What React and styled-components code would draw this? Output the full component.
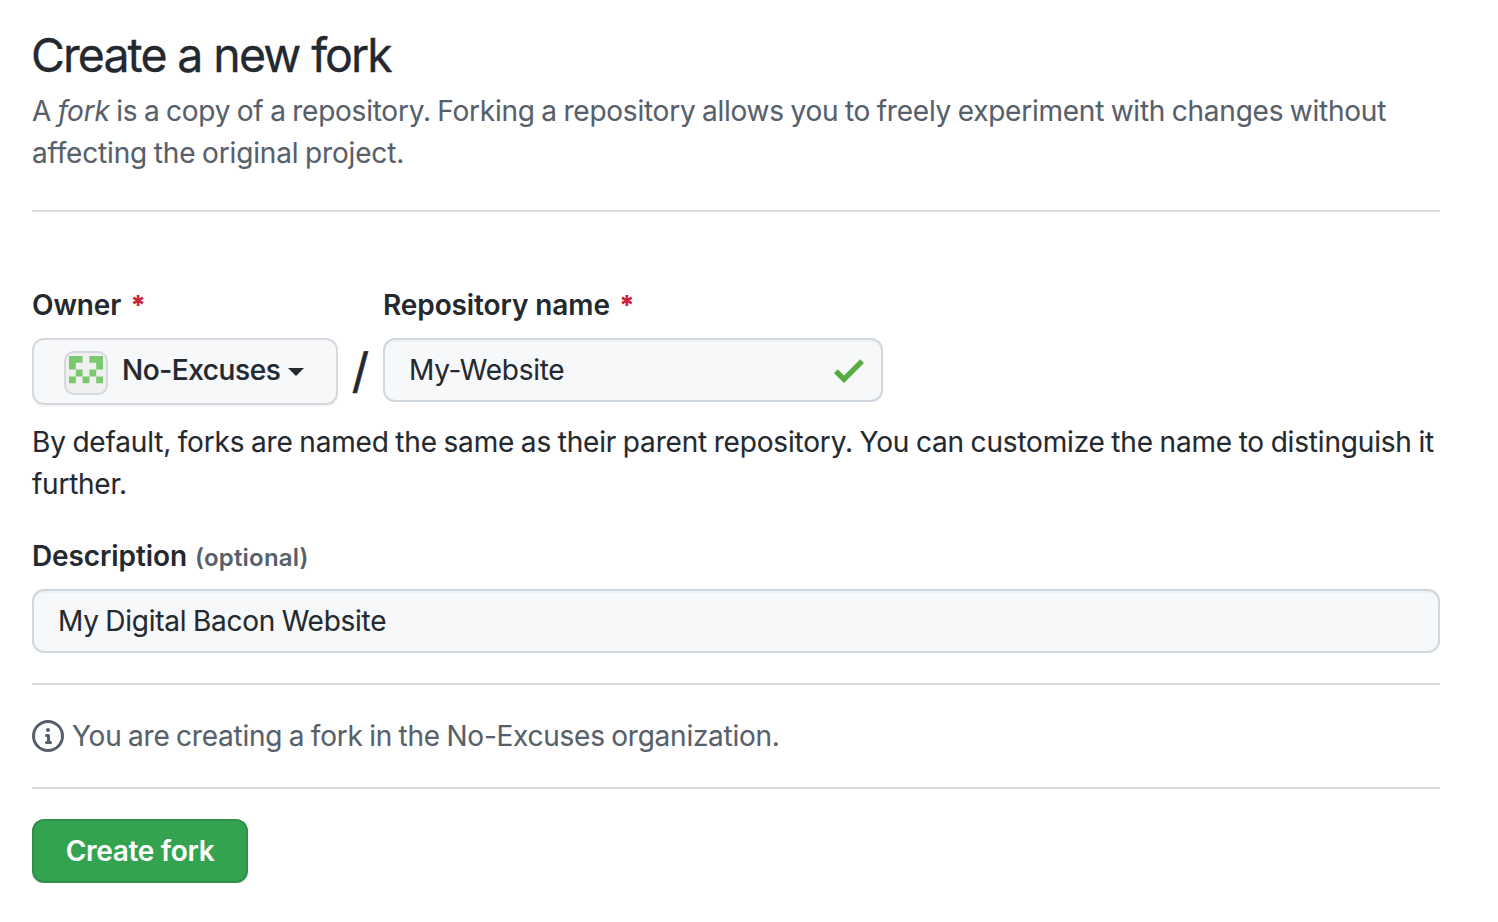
import React from "react";
import styled, { createGlobalStyle } from "styled-components";

const GlobalStyle = createGlobalStyle`
  *, *::before, *::after { box-sizing: border-box; }
  body {
    margin: 0;
    background: #ffffff;
    color: #24292f;
    font-family: Inter, "Liberation Sans", sans-serif;
    font-size: 28px;
    line-height: 42px;
  }
`;

const Page = styled.main`
  width: 1472px;
  padding: 20px 32px 0;
`;

const Title = styled.h1`
  margin: 0 0 0 -1px;
  font-size: 46.5px;
  font-weight: 400;
  line-height: 70px;
  letter-spacing: -1.95px;
  word-spacing: 0.7px;
  white-space: nowrap;
  -webkit-text-stroke: 0.3px currentColor;
`;

const Line = styled.span`
  display: block;
  white-space: nowrap;
  letter-spacing: ${(p) => p.$track ?? -0.25}px;
  word-spacing: -1px;
  -webkit-text-stroke: 0.1px currentColor;
`;

const Lead = styled.p`
  margin: 0;
  color: #57606a;
`;

const Divider = styled.hr`
  height: 2px;
  margin: ${(p) => p.$top}px 0 0;
  border: 0;
  background: #d8dee0;
`;

const NameRow = styled.div`
  display: flex;
  margin-top: 73px;
`;

const Field = styled.div`
  display: flex;
  flex-direction: column;
  gap: 13px;
  width: ${(p) => p.$width};
`;

const Label = styled.label`
  font-weight: 600;
  line-height: 40px;
  white-space: nowrap;
  letter-spacing: -0.1px;
`;

const Required = styled.span`
  margin-left: 9px;
  font-size: 27px;
  font-weight: 800;
  line-height: 1;
  color: #c9243a;
`;

const Optional = styled.span`
  margin-left: 8px;
  font-size: 24px;
  line-height: 1;
  letter-spacing: 0.2px;
  color: #57606a;
`;

const OwnerButton = styled.button`
  display: flex;
  align-items: center;
  width: 306px;
  height: 67px;
  padding: 0 0 0 30px;
  border: 2px solid #d5d8dc;
  border-radius: 12px;
  background: #f6f8fa;
  box-shadow: 0 2px 0 rgba(27, 31, 36, 0.04);
  color: #24292f;
  font: 500 28px/42px Inter, sans-serif;
`;

const Avatar = styled.span`
  width: 44px;
  height: 44px;
  margin-top: 3px;
  padding: 3px;
  border: 2px solid #d5d8dc;
  border-radius: 10px;
  background: #f0f0f0;
  line-height: 0;
`;

const OwnerName = styled.span`
  margin: 0 8px 3px 14px;
  letter-spacing: -0.42px;
  white-space: nowrap;
  -webkit-text-stroke: 0.2px currentColor;
`;

const Caret = styled.span`
  border: 8px solid transparent;
  border-top-color: #24292f;
  border-bottom: 0;
  margin-top: 1px;
`;

const Slash = styled.span`
  width: 45px;
  padding-top: 52px;
  text-align: center;
  font-size: 48px;
  line-height: 68px;
  -webkit-text-stroke: 0.6px currentColor;
`;

const InputBox = styled.div`
  display: flex;
  align-items: center;
  justify-content: space-between;
  height: 64px;
  padding: 0 17px 0 24px;
  border: 2px solid #d0d7de;
  border-radius: 12px;
  background: #f6f8fa;
  box-shadow: inset 0 2px 0 rgba(208, 215, 222, 0.2);
`;

const Hint = styled.p`
  margin: 16px 0 0;
`;

const DescriptionField = styled(Field)`
  margin-top: 31px;
`;

const Notice = styled.div`
  display: flex;
  align-items: center;
  gap: 8px;
  margin-top: 30px;
  color: #57606a;
`;

const SubmitButton = styled.button`
  display: block;
  width: 216px;
  height: 64px;
  margin-top: 30px;
  padding: 0;
  border: 2px solid #2f8f4b;
  border-radius: 12px;
  background: #34a350;
  box-shadow: 0 2px 0 rgba(27, 31, 36, 0.06);
  color: #ffffff;
  font: 600 28px/42px Inter, sans-serif;
  letter-spacing: -0.3px;
  white-space: nowrap;
`;

const IDENTICON = ["11011", "10001", "01010", "10101"];

const IDENTICON_PATH = IDENTICON.flatMap((row, y) =>
  [...row].map((cell, x) => (cell === "1" ? `M${x} ${y}h1v1h-1z` : ""))
).join("");

function Identicon() {
  return (
    <svg width="34" height="34" viewBox="0 0 5 5" fill="#7bc96f">
      <path d={IDENTICON_PATH} />
    </svg>
  );
}

const CheckMark = styled.svg`
  margin-top: 2px;
`;

function CheckIcon() {
  return (
    <CheckMark width="30" height="24" viewBox="0 3.5 12 9.5" fill="#57ab3f">
      <path d="M12 5l-8 8-4-4 1.5-1.5L4 10l6.5-6.5L12 5z" />
    </CheckMark>
  );
}

function InfoIcon() {
  return (
    <svg width="32" height="32" viewBox="0 0 16 16" fill="#57606a">
      <path
        fillRule="evenodd"
        d="M8 1.5a6.5 6.5 0 100 13 6.5 6.5 0 000-13zM0 8a8 8 0 1116 0A8 8 0 010 8zm6.5-.25A.75.75 0 017.25 7h1a.75.75 0 01.75.75v2.75h.25a.75.75 0 010 1.5h-2a.75.75 0 010-1.5h.25v-2h-.25a.75.75 0 01-.75-.75zM8 6a1 1 0 100-2 1 1 0 000 2z"
      />
    </svg>
  );
}

export default function App() {
  return (
    <>
      <GlobalStyle />
      <Page>
        <Title>Create a new fork</Title>
        <Lead>
          <Line $track={-0.24}>
            A <em>fork</em> is a copy of a repository. Forking a repository allows you to freely experiment with changes without
          </Line>
          <Line $track={-0.16}>affecting the original project.</Line>
        </Lead>
        <Divider $top={36} />
        <NameRow>
          <Field $width="306px">
            <Label>
              Owner<Required>*</Required>
            </Label>
            <OwnerButton type="button">
              <Avatar>
                <Identicon />
              </Avatar>
              <OwnerName>No-Excuses</OwnerName>
              <Caret />
            </OwnerButton>
          </Field>
          <Slash>/</Slash>
          <Field $width="500px">
            <Label>
              Repository name<Required>*</Required>
            </Label>
            <InputBox>
              <Line>My-Website</Line>
              <CheckIcon />
            </InputBox>
          </Field>
        </NameRow>
        <Hint>
          <Line $track={-0.18}>By default, forks are named the same as their parent repository. You can customize the name to distinguish it</Line>
          <Line>further.</Line>
        </Hint>
        <DescriptionField $width="100%">
          <Label>
            Description<Optional>(optional)</Optional>
          </Label>
          <InputBox>
            <Line>My Digital Bacon Website</Line>
          </InputBox>
        </DescriptionField>
        <Divider $top={30} />
        <Notice>
          <InfoIcon />
          <Line>You are creating a fork in the No-Excuses organization.</Line>
        </Notice>
        <Divider $top={30} />
        <SubmitButton type="button">Create fork</SubmitButton>
      </Page>
    </>
  );
}
